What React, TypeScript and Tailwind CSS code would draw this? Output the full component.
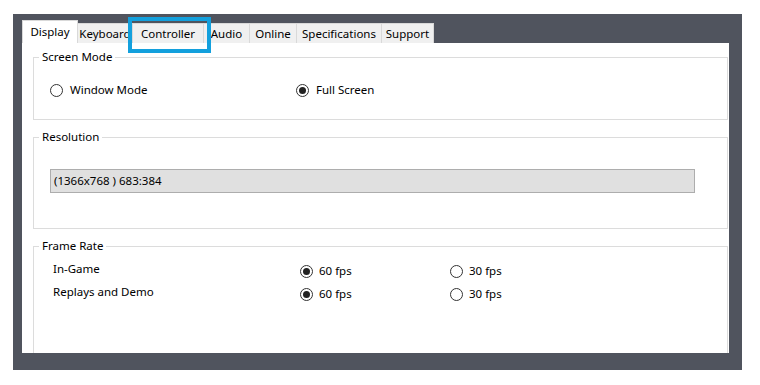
import React from "react";

function Radio({ checked }: { checked?: boolean }) {
  return (
    <span className="w-[13px] h-[13px] rounded-full border border-[#333333] bg-white flex items-center justify-center shrink-0">
      {checked && <span className="w-[7px] h-[7px] rounded-full bg-[#222222]" />}
    </span>
  );
}

function Option({ label, checked, gap = "gap-[7px]" }: { label: string; checked?: boolean; gap?: string }) {
  return (
    <span className={`flex items-center ${gap}`}>
      <Radio checked={checked} />
      <span>{label}</span>
    </span>
  );
}

function Group({ title, className, children }: { title: string; className: string; children: React.ReactNode }) {
  return (
    <fieldset className={`w-[695px] border border-[#dcdcdc] shrink-0 ${className}`}>
      <legend className="ml-[5px] px-[3px] leading-[16px]">{title}</legend>
      {children}
    </fieldset>
  );
}

const tabs = [
  { name: "Keyboard", w: "w-[55px]" },
  { name: "Controller", w: "w-[71px]" },
  { name: "Audio", w: "w-[46px]" },
  { name: "Online", w: "w-[47px]" },
  { name: "Specifications", w: "w-[85px]" },
  { name: "Support", w: "w-[52px]" },
];

export default function App() {
  return (
    <div className="w-[760px] h-[385px] bg-white pt-[14px] pl-[13px] text-[11.5px] text-black font-['Segoe_UI','Noto_Sans',sans-serif]">
      <div className="relative w-[729px] h-[356px] bg-[#50545e] pl-[9px] pt-[6px] flex flex-col">
        {/* tab strip */}
        <div className="flex items-end h-[23px]">
          <div className="w-[56px] h-[23px] bg-white border-t border-l border-r border-[#d9d9d9] flex items-center justify-center pb-[1px]">
            Display
          </div>
          {tabs.map((t, i) => (
            <div
              key={t.name}
              className={`${t.w} h-[20px] bg-[#f0f0f0] border-t border-r border-[#d9d9d9] flex items-center justify-center whitespace-nowrap overflow-hidden ${i === 0 ? "border-l-0" : ""}`}
            >
              {t.name}
            </div>
          ))}
        </div>

        {/* panel */}
        <div className="w-[707px] h-[310px] bg-white overflow-hidden pl-[11px] pt-[6px] flex flex-col">
          <Group title="Screen Mode" className="h-[71px]">
            <div className="flex items-center pl-[16px] pt-[17px] leading-[16px]">
              <div className="w-[246px]">
                <Option label="Window Mode" />
              </div>
              <Option label="Full Screen" checked />
            </div>
          </Group>

          <Group title="Resolution" className="h-[100px] mt-[9px]">
            <div className="pl-[16px] pt-[24px]">
              <div className="w-[645px] h-[24px] bg-[#e0e0e0] border border-[#adadad] pl-[3px] flex items-center">
                (1366x768 ) 683:384
              </div>
            </div>
          </Group>

          <Group title="Frame Rate" className="h-[130px] mt-[9px]">
            <div className="pl-[19px] pt-[7px] flex flex-col gap-[7px] leading-[16px]">
              {["In-Game", "Replays and Demo"].map((row) => (
                <div key={row} className="flex items-center h-[16px]">
                  <div className="w-[247px]">{row}</div>
                  <div className="w-[150px] translate-y-[2px]">
                    <Option label="60 fps" checked gap="gap-[6px]" />
                  </div>
                  <div className="translate-y-[2px]">
                    <Option label="30 fps" gap="gap-[6px]" />
                  </div>
                </div>
              ))}
            </div>
          </Group>
        </div>

        {/* highlight box */}
        <div className="absolute left-[115px] top-[3px] w-[83px] h-[36px] border-[4px] border-[#13a0dd]" />
      </div>
    </div>
  );
}
